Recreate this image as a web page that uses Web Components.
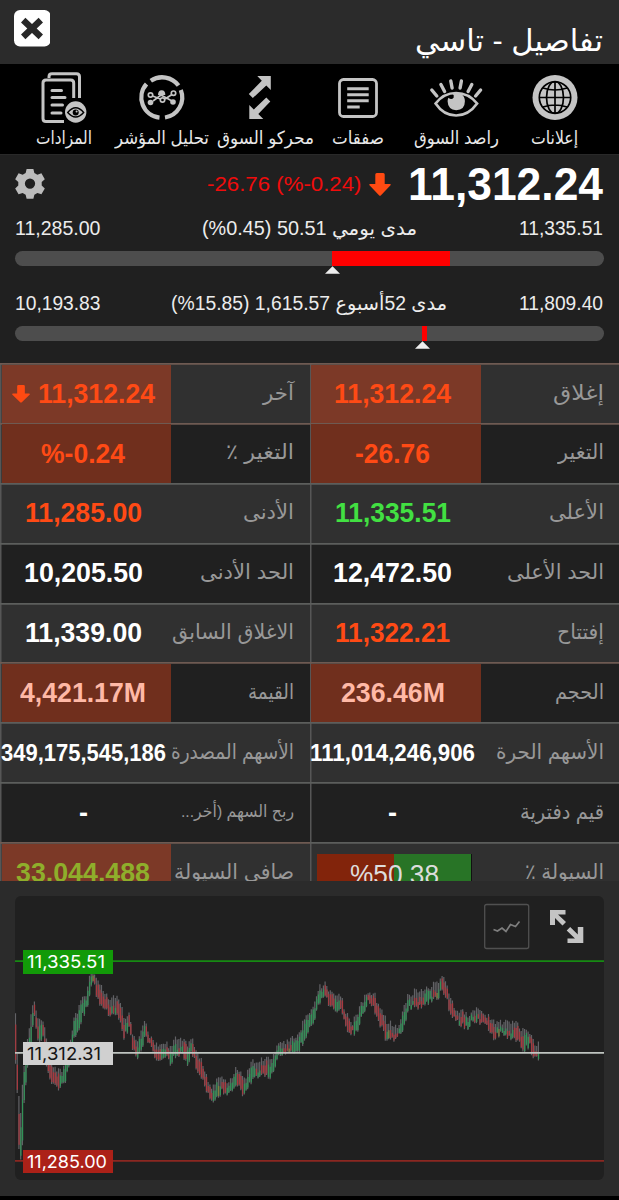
<!DOCTYPE html>
<html lang="ar">
<head>
<meta charset="utf-8">
<title>تفاصيل - تاسي</title>
<style>
html,body{margin:0;background:#000}
body{width:619px;height:1200px;overflow:hidden;font-family:"Liberation Sans","DejaVu Sans",sans-serif;color:#fff}
</style>
</head>
<body>
<market-app></market-app>
<script>
const make = (name, html, init) => customElements.define(name, class extends HTMLElement {
  connectedCallback() {
    if (this.shadowRoot) return;
    const root = this.attachShadow({mode: 'open'});
    root.innerHTML = typeof html === 'function' ? html(this) : html;
    if (init) init(this, root);
  }
});
const DOWN = '<svg viewBox="0 0 22 23" preserveAspectRatio="none"><path fill="#ff4a12" d="M6.3 1.5Q6.3 0 7.8 0h6.4q1.5 0 1.5 1.5V11h5.2q1.7 0 .6 1.3L12 22.2q-1 1-2 0L.5 12.3Q-.5 11 1.1 11h5.2z"/></svg>';

make('market-app', `
<style>:host{display:flex;flex-direction:column;width:619px;height:1200px}</style>
<page-head></page-head><nav-bar></nav-bar><price-summary></price-summary><quote-table></quote-table><chart-panel></chart-panel>`);

make('page-head', `
<style>
:host{display:flex;justify-content:space-between;box-sizing:border-box;height:64px;background:#2b2b2b;padding:10px 16px 0 14px}
svg{width:36px;height:37px;flex:none}
.t{font-size:30px;line-height:40px;padding-top:11px}
</style>
<svg viewBox="0 0 36 37"><rect width="36.5" height="36.5" rx="6" fill="#fff"/><path d="M9.2 10.2L26.8 26.8M26.8 10.2L9.2 26.8" stroke="#282828" stroke-width="6.4"/></svg>
<div class="t"><fit-text w="188" dir="rtl">تفاصيل - تاسي</fit-text></div>`);

const ICONS = {
auctions:`<g fill="none" stroke="#c4c4c4" stroke-width="3"><path d="M49 78v-1.300q0-2.900 3-2.900h24.500q3 0 3 3V98"/><path d="M73.700 98V83q0-3-3-3H46q-3 0-3 3v35.500q0 3 3 3h18"/></g><path d="M52 90.500h9.500M52 97.500h13M52 105h10.500M52 113h9" stroke="#c4c4c4" stroke-width="3" stroke-linecap="round"/><circle cx="75.700" cy="112" r="10.700" fill="#c4c4c4"/><path d="M67.700 112.500q8-9.500 16 0q-8 9-16 0z" fill="none" stroke="#000" stroke-width="1.300"/><circle cx="75.700" cy="112.500" r="3" fill="#000"/><circle cx="76.600" cy="111.500" r="1" fill="#c4c4c4"/>`,
analysis:`<g fill="none" stroke="#c4c4c4" stroke-width="4.300"><path d="M150.800 80.800A20.300 20.300 0 0 1 178.500 85.500"/><path d="M180.800 90A20.300 20.300 0 0 1 165 117.500"/><path d="M159.500 117.700A20.300 20.300 0 0 1 146.500 84"/></g><g fill="none" stroke="#c4c4c4" stroke-width="1.700"><path d="M152.500 96l8 3 M165 99l7-4.500M153 101l8-6 11 6"/><circle cx="150.500" cy="95" r="2.200"/><circle cx="162.500" cy="100" r="2.200"/><circle cx="173.500" cy="93.200" r="2.200"/></g><g fill="#c4c4c4"><path d="M158 95q0-4.800 3.700-4.800T165.300 95z"/><circle cx="150.500" cy="102.500" r="2.800"/><circle cx="173" cy="102" r="2.800"/></g>`,
movers:`<path fill="#c4c4c4" d="M257.500 76H271v14l-4.500-4.500L253 98l-4-4 13-13.300zM249.500 119h14l-5-5 12-12.500-4-4-12.500 12-4.500-4.500z"/>`,
deals:`<rect x="339.800" y="79.500" width="37" height="37" rx="4" fill="none" stroke="#c4c4c4" stroke-width="2.800"/><path d="M347.500 88.700h21.500M347.500 94.700h21.500M347.500 100.700h21.500M347.500 107h12.500" stroke="#c4c4c4" stroke-width="3"/>`,
watcher:`<path d="M436 103.500Q444 93 456.500 93T477.500 103.500Q469 115.500 456.500 115.500T436 103.500z" fill="none" stroke="#c4c4c4" stroke-width="2.700"/><path d="M453 93.600q3.500-1.600 8 0 4.300 2.800 4.300 7.700 0 8.700-8.700 9-8.300-.5-8.600-9 0-2 .8-3.500 3 2.500 5.200 0 .8-2.400-1-4.200z" fill="#c4c4c4"/><path d="M432.200 90l5 6M441.300 84.500l3.700 7M451.200 81l1.300 7M461.800 81l-1.300 7M472.200 84.500l-3.700 7M481 90l-5 6" stroke="#c4c4c4" stroke-width="3.400" stroke-linecap="round"/>`,
news:`<circle cx="554.500" cy="97.500" r="22.500" fill="#c4c4c4"/><circle cx="554.500" cy="97.500" r="15.700" fill="none" stroke="#000" stroke-width="1.700"/><g fill="none" stroke="#000" stroke-width="1.700"><ellipse cx="554.500" cy="97.500" rx="8.500" ry="16"/><path d="M554.500 82v31M539 97.500h31M542.500 88q12 4 24 0M542.500 107q12-4 24 0"/></g>`};

make('nav-bar', `
<style>:host{display:grid;grid-template-columns:repeat(6,98.100px);justify-content:start;padding-left:15px;height:90px;background:#000}</style>
<nav-item icon="auctions" cx="64" w="56">المزادات</nav-item>
<nav-item icon="analysis" cx="162" w="94">تحليل المؤشر</nav-item>
<nav-item icon="movers" cx="260.200" w="97" shift="5">محركو السوق</nav-item>
<nav-item icon="deals" cx="358.300" w="52">صفقات</nav-item>
<nav-item icon="watcher" cx="456.400" w="85">راصد السوق</nav-item>
<nav-item icon="news" cx="554.500" w="47">إعلانات</nav-item>`);
make('nav-item', el => `
<style>:host{display:flex;flex-direction:column;align-items:center;color:#e8e8e8}
svg{width:60px;height:56px;margin-top:4px}
.l{font-size:18px;line-height:22px;margin-top:3px;margin-left:${(el.getAttribute('shift')||0)*2}px}</style>
<svg viewBox="${el.getAttribute('cx')-30} 68 60 56">${ICONS[el.getAttribute('icon')]}</svg>
<div class="l"><fit-text dir="rtl" w="${el.getAttribute('w')}"><slot></slot></fit-text></div>`);

make('price-summary', `
<style>
:host{display:block;height:209px;background:#202020;border-top:1px solid #292929;box-sizing:border-box;padding:0 15px}
.p{display:flex;align-items:center;height:59.500px}
.gear{width:30px;height:31px;margin-top:-2px}
.chg{font-size:21px;color:#f00c0c;margin-left:161.500px;line-height:30px;margin-top:-1.500px}
.arr{width:22px;height:23px;margin-left:8px;display:flex}
.arr svg{width:22px;height:23px}
.big{font-size:46px;font-weight:bold;line-height:56px;margin:-2px 0 0 16.500px}
</style>
<div class="p">
<svg class="gear" viewBox="0 0 31 31"><path fill="#bcbcbc" fill-rule="evenodd" d="M12 .4h7l1 4.200 3.100 1.800 4.200-1.400 3.500 6-3.200 3v3.600l3.200 3-3.500 6-4.200-1.400-3.100 1.800-1 4.200h-7l-1-4.200-3.100-1.800-4.200 1.400-3.500-6 3.200-3V14L.2 11l3.500-6 4.200 1.400L11 4.600zM15.500 10.300a5.300 5.300 0 1 0 0 10.600 5.300 5.300 0 0 0 0-10.600z"/></svg>
<div class="chg"><fit-text w="154.500">-26.76 (%-0.24)</fit-text></div>
<div class="arr">${DOWN}</div>
<div class="big"><fit-text w="195">11,312.24</fit-text></div>
</div>
<range-bar low="11,285.00" high="11,335.51" cl="202" cw="215" from="317.500" to="435" mark="317.500"><span>مدى يومي <bdi dir="ltr">(%0.45) 50.51</bdi></span></range-bar>
<range-bar low="10,193.83" high="11,809.40" cl="171" cw="276" from="407.500" to="412.500" mark="407.500"><span>مدى 52أسبوع <bdi dir="ltr">(%15.85) 1,615.57</bdi></span></range-bar>`);

make('range-bar', el => { const a = n => el.getAttribute(n); return `
<style>
:host{display:block;height:75px;color:#ececec}
.r{display:grid;grid-template-columns:${a('cl')-15}px 1fr 85px;font-size:20px;line-height:26px;height:26px}
.b{height:15px;border-radius:8px;margin-top:10.500px;background:linear-gradient(90deg,#4d4d4d ${a('from')}px,#f00 ${a('from')}px ${a('to')}px,#4d4d4d ${a('to')}px)}
svg{display:block;width:15px;height:8px;margin-left:${a('mark')-7.5}px}
.c{font-size:19.500px}
</style>
<div class="r"><fit-text w="85.500">${a('low')}</fit-text><fit-text class="c" dir="rtl" w="${a('cw')}"><slot></slot></fit-text><fit-text w="84">${a('high')}</fit-text></div>
<div class="b"></div><svg viewBox="0 0 15 8"><path d="M7.500 .3L15 7.700H0z" fill="#eee"/></svg>`; });

const O='#ff4a15', W='#fff', P='#ffb9a6', G='#42e042';
const rows = [
 [['آخر',31,'11,312.24',117,O,1,'arrow'],['إغلاق',51,'11,312.24',117,O,1]],
 [['التغير ٪',68,'%-0.24',84,O,1],['التغير',46,'-26.76',75,O,1]],
 [['الأدنى',51,'11,285.00',117,O],['الأعلى',55,'11,335.51',116,G]],
 [['الحد الأدنى',94,'10,205.50',119,W],['الحد الأعلى',97,'12,472.50',119,W]],
 [['الاغلاق السابق',122,'11,339.00',117,W],['إفتتاح',47,'11,322.21',115,O]],
 [['القيمة',46,'4,421.17M',126,P,1],['الحجم',49,'236.46M',104,P,1]],
 [['الأسهم المصدرة',123,'349,175,545,186',165,W,0,'small'],['الأسهم الحرة',108,'111,014,246,906',165,W,0,'small']],
 [['ربح السهم (أخر...',113,'-',9,W,0,'tiny'],['قيم دفترية',84,'-',9,W]],
 [['صافي السيولة',120,'33,044,488',134,'#8fae2b',1],['السيولة ٪',79,'%50.38',89,'#ddd',0,'meter']]];
make('quote-table', `
<style>:host{display:grid;grid-template-columns:309.500px 309.500px;grid-auto-rows:59.880px;height:518px;overflow:hidden;background:#202020}</style>` +
rows.map((r,i)=>r.map(c=>`<quote-cell label="${c[0]}" lw="${c[1]}" value="${c[2]}" vw="${c[3]}" color="${c[4]}" hot="${c[5]||0}" kind="${c[6]||''}" odd="${i%2}"></quote-cell>`).join('')).join(''));
make('quote-cell', el => { const a = n => el.getAttribute(n), k=a('kind'), odd=a('odd')==='1', hot=a('hot')==='1'; return `
<style>
:host{display:flex;box-sizing:border-box;box-shadow:inset 0 1.700px ${hot?'#6e5a52':'#5c5e5c'},inset 1.500px 0 #565656;background:${odd?'#202020':'#303030'}}
:host{padding:1.500px 0 0 1.500px}
.v{width:169.500px;box-sizing:border-box;padding-right:6px;flex:none;display:flex;align-items:center;justify-content:center;background:${hot?(odd?'#702f1d':'#7c3927'):'none'};color:${a('color')};font-weight:bold;font-size:${k==='small'?24:27.5}px;line-height:58px}
.l{flex:1;display:flex;justify-content:flex-end;padding-right:15.500px;color:#989898;font-size:${k==='tiny'?17:21}px;line-height:55px}
.arr{width:18px;height:18px;display:flex;margin:0 8px 0 0}.arr svg{width:18px;height:18px}
.m{display:flex;justify-content:center;width:154px;height:40px;flex:none;margin:3px 0 0 3px;line-height:43px;font-size:27px;font-weight:normal;background:linear-gradient(90deg,#82240b 50%,#287426 50%);box-shadow:1px 0 #111}
</style>
<div class="v">${k==='arrow'?`<span class="arr">${DOWN}</span>`:''}${k==='meter'?`<div class="m"><fit-text w="${a('vw')}">${a('value')}</fit-text></div>`:`<fit-text w="${a('vw')}">${a('value')}</fit-text>`}</div>
<div class="l"><fit-text dir="rtl" w="${a('lw')}">${a('label')}</fit-text></div>`; });

/* x, top, bottom of the price envelope */
const E = [[15,1005,1054],[17,1050,1083],[18.5,1085,1143],[20,1125,1159],[22,1086,1158],[24,1065,1103],[27,1040,1075],[31,1013,1045],[34,1000,1016],[36,1010,1030],[39,1022,1045],[43,1018,1040],[46,1035,1068],[50,1060,1080],[54,1065,1084],[59,1070,1091],[64,1068,1084],[69,1045,1070],[73,1023,1042],[78,1010,1032],[82,997,1018],[86,993,1010],[89,980,1003],[91,968,985],[94,970,986],[98,978,1000],[103,990,1010],[110,997,1014],[116,997,1016],[120,1003,1020],[124,1015,1038],[129,1015,1030],[133,1036,1050],[137,1043,1060],[141,1032,1050],[145,1022,1038],[149,1033,1045],[153,1040,1055],[160,1045,1062],[166,1040,1055],[170,1047,1064],[176,1038,1055],[183,1038,1055],[187,1045,1065],[192,1040,1053],[197,1050,1070],[203,1065,1082],[208,1080,1094],[212,1086,1102],[217,1080,1096],[222,1078,1093],[226,1083,1098],[231,1078,1090],[236,1069,1085],[240,1072,1090],[244,1081,1099],[250,1064,1085],[256,1060,1078],[263,1058,1073],[268,1060,1079],[273,1055,1075],[279,1040,1056],[285,1043,1056],[292,1038,1053],[299,1032,1050],[304,1018,1042],[309,1010,1030],[313,1005,1024],[318,990,1005],[324,981,997],[329,990,1005],[335,995,1012],[340,993,1008],[346,1013,1030],[353,1022,1034],[358,1012,1030],[363,1000,1013],[368,990,1003],[374,992,1010],[379,1005,1023],[386,1020,1040],[393,1025,1040],[398,1025,1038],[404,1005,1027],[409,994,1010],[416,990,1008],[424,990,1008],[431,985,1002],[438,983,1000],[441,975,992],[445,978,994],[450,993,1015],[455,1010,1022],[461,1010,1025],[466,1015,1030],[473,1010,1022],[480,1010,1023],[488,1015,1030],[494,1020,1038],[500,1021,1035],[508,1023,1040],[514,1021,1037],[520,1026,1045],[524,1032,1053],[529,1031,1045],[534,1042,1060],[539,1042,1058]];
function candles(){
  let s = 7, out = '';
  const rnd = () => (s = (s*16807)%2147483647)/2147483647;
  for (let x=15.5, i=0; x<539.5; x+=1.72) {
    while (i<E.length-2 && E[i+1][0]<x) i++;
    const [x0,t0,b0]=E[i],[x1,t1,b1]=E[i+1], f=(x-x0)/(x1-x0);
    const t=t0+(t1-t0)*f+rnd()*7-3, b=b0+(b1-b0)*f+rnd()*7-4, h=b-t, slope=(t1+b1-t0-b0)/(x1-x0);
    const flat=Math.abs(slope)<1.2, up = flat ? rnd()>.5 : slope<0;
    const c = flat && rnd()<.2 ? '#87813b' : up ? '#329257' : '#a8393f';
    out += `<path d="M${x.toFixed(1)} ${t.toFixed(1)}V${b.toFixed(1)}" stroke="#626266" stroke-width="1.200"/>`;
    const o=rnd()*.25+(flat?.4:.15);
    out += `<path d="M${(x+.2).toFixed(1)} ${(t+h*o).toFixed(1)}V${(b-h*.08).toFixed(1)}" stroke="${c}" stroke-width="1.200"/>`;
  }
  return out;
}
make('chart-panel', `
<style>
:host{display:block;height:315px;background:#2b2b2b;padding:15px 15px 0;box-sizing:border-box}
.c{position:relative;width:589px;height:284px;background:#202020;border-radius:6px;overflow:hidden}
svg{display:block}
price-tag{position:absolute;left:7.500px}
</style>
<div class="c">
<svg width="589" height="284" viewBox="15 896 589 284">
<g>${candles()}</g>
<path d="M15 961.200H604" stroke="#168a12" stroke-width="1.700"/><path d="M15 1052.800H604" stroke="#bfc4c0" stroke-width="1.700"/><path d="M15 1160.800H604" stroke="#8b2721" stroke-width="1.700"/>
<rect x="484.700" y="904.500" width="44" height="44" rx="2" fill="none" stroke="#505050" stroke-width="1.300"/>
<path d="M493.500 929.500l4 1.500 4.500-3 4 3.500 4.500-7 5 2 4-5" fill="none" stroke="#7e7e7e" stroke-width="1.700"/>
<path d="M550 910h15.500v4.500h-7.500l8 7.500-3.500 3.500-7.500-7.500v7h-5zM583.300 943h-15.800v-4.500h7.500l-8.300-8 3.500-3.500 7.600 7.500v-7.500h5.500z" fill="#c4c4c4"/>
</svg>
<price-tag style="top:54px" bg="#129a08" color="#fff" w="78">11,335.51</price-tag>
<price-tag style="top:145.500px" bg="#d0d0d0" color="#151515" w="74">11,312.31</price-tag>
<price-tag style="top:253.500px" bg="#ac2118" color="#fff" w="80">11,285.00</price-tag>
</div>`);
make('price-tag', el => `
<style>:host{display:block;box-sizing:border-box;width:90px;height:23.500px;padding-left:4.500px;font:17.500px/23px Inter,"Liberation Sans",sans-serif;background:${el.getAttribute('bg')};color:${el.getAttribute('color')}}</style>
<fit-text w="${el.getAttribute('w')}"><slot></slot></fit-text>`);

/* keeps a run of text on one line at an exact width */
make('fit-text', `<style>:host{display:block;white-space:nowrap}span{display:inline-block;transform-origin:0 50%;vertical-align:top}div{direction:ltr}</style><div><span><slot></slot></span></div>`,
 (el, root) => {
  const s = root.querySelector('span'), w = +el.getAttribute('w');
  s.style.direction = el.getAttribute('dir') || 'ltr';
  el.style.width = w + 'px';
  const n = s.getBoundingClientRect().width;
  if (n) s.style.transform = `scaleX(${w/n})`;
 });
</script>
</body>
</html>
